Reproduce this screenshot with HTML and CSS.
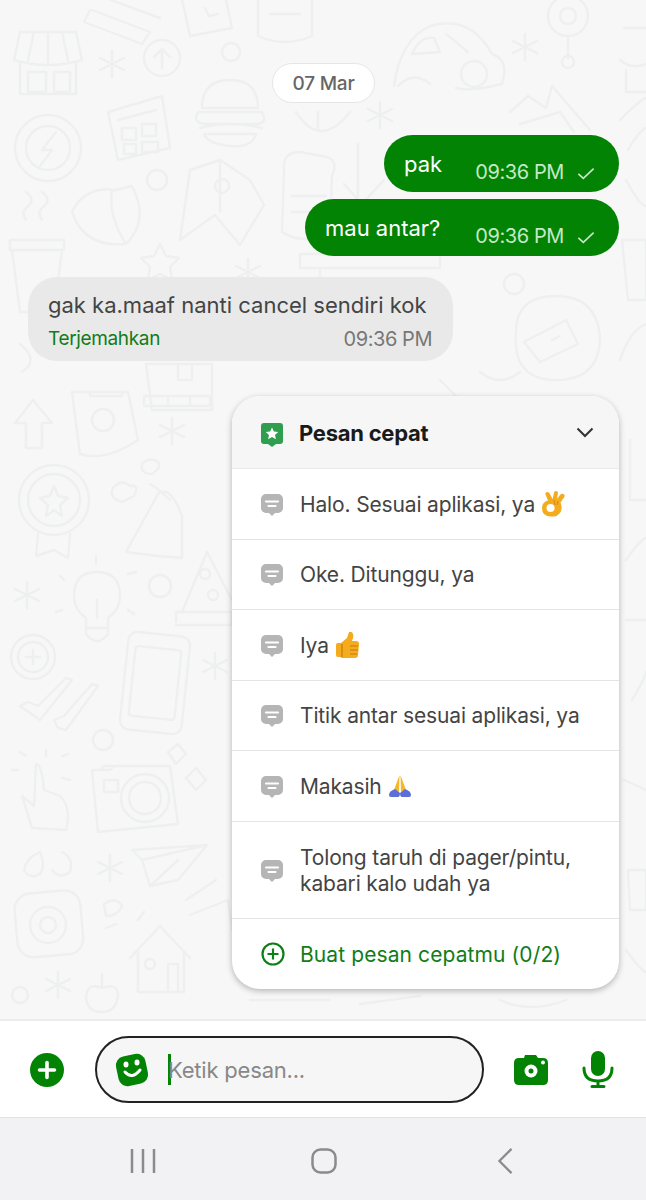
FILE: index.html
```html
<!DOCTYPE html>
<html lang="id">
<head>
<meta charset="utf-8">
<title>Chat</title>
<link rel="stylesheet" href="styles.css">
</head>
<body>
<svg class="defs" width="0" height="0" aria-hidden="true">
  <defs>
    <g id="ast"><path d="M0-13V13M-12-6 12 6M-12 6 12-6"/></g>
    <g id="msg"><path fill="#b5b5b5" d="M5 0h12a5 5 0 0 1 5 5v9a5 5 0 0 1-5 5h-3l-3 3-3-3H5a5 5 0 0 1-5-5V5a5 5 0 0 1 5-5z"/><path d="M5 7.500h12M7.500 12h7" stroke="#fff" stroke-width="2.200" stroke-linecap="round" fill="none"/></g>
  </defs>
</svg>
<div class="screen">
  <main class="chat">
    <svg class="doodles" viewBox="0 0 646 1021" aria-hidden="true">
      <g fill="none" stroke="#eeefef" stroke-width="2.400" stroke-linejoin="round" stroke-linecap="round">
        <!-- top row -->
        <path d="M92 10 150 32M100-4 160 18M90 10 84 22 142 44 150 32"/>
        <path d="M182 0 190 36 232 28 226 0M205 8l4 8 9-2"/>
        <path d="M258 0V36Q285 48 312 36V0M270 14H300"/>
        <path d="M20 32H76L82 60Q48 70 14 60zM34 32 28 60M48 32V62M62 32 68 60M20 64V94H76V64M28 72H46V92H28zM54 72H70V92H54z"/>
        <use href="#ast" x="112" y="64"/>
        <circle cx="162" cy="58" r="18"/><path d="M162 68V50M154 57 162 49 170 57"/>
        <circle cx="231" cy="52" r="9"/>
        <circle cx="48" cy="148" r="33"/><circle cx="48" cy="148" r="22"/><path d="M56 132 42 150H52L40 166"/>
        <path d="M108 112 162 96 170 148 118 160zM118 120 156 110M122 128H136V140H122zM142 124H156V136H142zM124 144H136V154H124zM142 142H158V152H142z"/>
        <path d="M202 108Q202 80 230 80T258 108zM198 112H262Q268 122 258 124H204Q192 122 198 112zM200 128Q230 120 262 128M204 134H256Q252 148 230 146T204 134z"/>
        <path d="M296 112Q320 150 350 112M318 112V128"/>
        <use href="#ast" x="380" y="115"/>
        <path d="M394 86Q400 40 430 26Q470 14 492 54Q510 60 502 84Q470 92 456 88M398 86Q414 70 430 84M412 54Q420 36 434 38L440 52zM446 34 468 52"/>
        <circle cx="474" cy="74" r="13"/>
        <use href="#ast" x="525" y="47"/>
        <circle cx="568" cy="16" r="20"/><circle cx="568" cy="16" r="8"/><path d="M568 36V58"/><circle cx="568" cy="62" r="6"/>
        <path d="M624 28H646M620 60Q632 70 646 64M626 70V92H646"/>
        <path d="M510 112 528 96 546 108 552 86 590 130M520 124 560 112 574 132"/>
        <!-- middle left -->
        <path d="M180 240 190 170 220 160 250 180 264 205 240 245 215 215zM220 162V212"/><circle cx="222" cy="186" r="7"/>
        <path d="M72 212Q84 186 116 190L132 186Q150 220 126 244Q84 248 72 212zM112 190Q108 216 126 244"/>
        <circle cx="157" cy="180" r="10"/>
        <path d="M284 170Q282 152 300 152L322 156Q340 158 332 176L330 236Q300 244 282 232zM292 196H326M292 212H322"/>
        <path d="M358 144V196M344 184 362 204 384 180"/>
        <path d="M12 250H62L54 312H20zM10 240H64V250H10zM26 220Q20 212 28 206T26 192M42 220Q36 212 44 206T42 192"/>
        <path d="M160 244 166 256 179 258 170 267 172 280 160 274 148 280 150 267 141 258 154 256z"/>
        <use href="#ast" x="248" y="272"/>
        <path d="M300 254H440V268H300zM320 268V300"/>
        <circle cx="514" cy="284" r="10"/>
        <path d="M516 332Q516 296 556 296T600 336Q600 380 556 380T516 332zM524 342 566 320 578 344 540 362zM552 340 560 336"/>
        <path d="M622 240H646V300H628zM620 120Q640 100 646 98M628 150Q640 130 646 128M626 180Q640 206 646 206"/>
        <path d="M630 440V500H646M620 360Q630 330 646 324"/>
        <path d="M50 296 70 284 90 300"/>
        <!-- under incoming bubble -->
        <path d="M146 364H212V410H152zM178 364V380H192V364"/>
        <path d="M20 344Q40 360 22 372M480 372Q500 388 520 372M440 380 460 400"/>
        <!-- lower left -->
        <path d="M33 400 52 423H42V448H26V423H15z"/>
        <path d="M72 392H128L138 440Q105 462 80 454zM90 392V396H122V392"/><circle cx="103" cy="420" r="11"/>
        <path d="M144 396H210V406H144zM168 396V406M190 396V406"/>
        <use href="#ast" x="172" y="431"/>
        <circle cx="54" cy="500" r="35"/><circle cx="54" cy="500" r="26"/>
        <path d="M54 486 58 496 68 498 60 505 62 516 54 510 46 516 48 505 40 498 50 496zM38 534 36 556 54 550 68 558 70 534"/>
        <path d="M113 488Q122 478 130 486 140 484 134 496L122 502Q108 498 113 488zM142 464Q150 456 158 462 162 468 152 474 140 474 142 464z"/>
        <path d="M126 552 158 494Q170 484 182 516L182 558 158 556zM150 484Q160 490 170 500"/>
        <use href="#ast" x="27" y="595"/>
        <path d="M97 572Q120 572 120 596 120 610 108 618V634Q97 648 86 634V618Q74 610 74 596 74 572 97 572zM86 628H108M97 600V618"/>
        <path d="M96 556V564M60 576 64 580M128 574 136 572M56 612 62 610M128 610 134 614"/>
        <circle cx="160" cy="586" r="11"/>
        <path d="M176 622V612H232V625H176M182 612 207 552 232 600M200 572"/>
        <circle cx="205" cy="574" r="5"/><circle cx="213" cy="595" r="5"/>
        <circle cx="33" cy="657" r="22"/><circle cx="33" cy="657" r="15"/><path d="M33 650V664M26 657H40"/>
        <path d="M20 706 40 720 72 680 66 678 38 706 28 702zM58 728 66 730 98 686 92 684 64 716 54 720z"/>
        <rect x="124" y="634" width="62" height="98" rx="9" transform="rotate(6 155 683)"/><rect x="132" y="648" width="46" height="70" rx="3" transform="rotate(6 155 683)"/>
        <use href="#ast" x="215" y="666"/>
        <circle cx="103" cy="740" r="10"/>
        <path d="M92 770H110L114 766H170L178 824 98 832zM100 770 104 766H116"/>
        <circle cx="145" cy="798" r="24"/><circle cx="145" cy="798" r="16"/><path d="M104 780H118V792H104z"/>
        <path d="M168 752 178 744 186 754 176 764zM186 778 196 768 206 780 196 790z"/>
        <path d="M36 764Q42 764 44 790L60 796Q72 808 66 830L32 828 22 796 34 806z"/>
        <path d="M46 750V756M20 752 26 756M62 756 68 754M12 770H18M62 778 70 780"/>
        <path d="M40 852Q26 858 24 870 30 880 40 874 46 866 40 852zM62 852Q74 858 70 872 60 880 52 870"/>
        <use href="#ast" x="110" y="868"/>
        <path d="M132 850 207 845 178 880 150 886 142 860zM142 860 207 845M150 886 178 860"/>
        <rect x="16" y="892" width="66" height="64" rx="16" transform="rotate(-5 48 925)"/><circle cx="48" cy="925" r="18"/><circle cx="48" cy="925" r="8"/>
        <path d="M104 904Q116 896 122 906 118 916 106 916zM106 928 116 924M138 920 144 912"/>
        <path d="M130 958 160 926 190 958M138 952V992H184V952M168 992V964H178V992"/><circle cx="150" cy="964" r="5"/>
        <path d="M186 900 216 880M190 915 228 900 232 930"/>
        <use href="#ast" x="58" y="985"/>
        <circle cx="20" cy="995" r="8"/>
        <path d="M102 988Q118 982 118 996 116 1012 102 1012 86 1012 86 996 88 982 102 988zM102 986V974"/>
        <!-- right edge and below card -->
        <path d="M626 560Q640 540 646 538M626 620H646M632 700Q644 680 646 672M624 780 646 790M628 870H646V910H630zM626 950Q640 970 646 972"/>
        <path d="M250 1000H330M360 1004 420 996M500 1000Q530 1014 566 1000"/>
      </g>
    </svg>
    <div class="date-pill">07 Mar</div>
    <div class="bubble outgoing first">
      <span class="msg-text">pak</span>
      <span class="msg-meta">09:36 PM<svg class="tick" viewBox="0 0 20 14"><path d="M1.500 7.500 7 12.500 18.500 1.500"/></svg></span>
    </div>
    <div class="bubble outgoing">
      <span class="msg-text">mau antar?</span>
      <span class="msg-meta">09:36 PM<svg class="tick" viewBox="0 0 20 14"><path d="M1.500 7.500 7 12.500 18.500 1.500"/></svg></span>
    </div>
    <div class="bubble incoming">
      <div class="msg-text">gak ka.maaf nanti cancel sendiri kok</div>
      <div class="incoming-foot"><span class="translate">Terjemahkan</span><span class="incoming-time">09:36 PM</span></div>
    </div>
    <section class="quick-card">
      <header class="quick-head">
        <svg class="quick-star" viewBox="0 0 22 24"><path fill="#2f9e4f" d="M3 0h16a3 3 0 0 1 3 3v15a3 3 0 0 1-3 3h-4l-4 3-4-3H3a3 3 0 0 1-3-3V3a3 3 0 0 1 3-3z"/><path fill="#fff" d="m11 4.500 1.900 4 4.300.5-3.200 2.900.9 4.300-3.900-2.200-3.900 2.200.9-4.300L4.800 9l4.300-.5z"/></svg>
        <h2 class="quick-title">Pesan cepat</h2>
        <svg class="chevron" viewBox="0 0 18 11"><path d="M1.500 1.500 9 9l7.500-7.500"/></svg>
      </header>
      <div class="quick-row"><svg class="msg-icon" viewBox="0 0 22 22"><use href="#msg"/></svg><span>Halo. Sesuai aplikasi, ya</span>
        <svg class="emoji" viewBox="0 0 24 26"><path fill="#f5ab1e" d="M10 25.500Q1 25.500 1 17 1 11 7 9.500L4.500 3.500Q4 1 6 1t3 2l2.500 5L13 2q0-2 2-2t2 2l-1 6 3-4q1.500-2 3.500-1t.5 3.500l-3.500 5q2.500 6-.5 10.500-3 3.500-6 3.500z"/><circle cx="9.500" cy="17" r="4" fill="#fff"/><path fill="none" stroke="#d9860f" stroke-width="1" d="M13 9 14 14M17 10l-1 4"/></svg></div>
      <div class="quick-row"><svg class="msg-icon" viewBox="0 0 22 22"><use href="#msg"/></svg><span>Oke. Ditunggu, ya</span></div>
      <div class="quick-row"><svg class="msg-icon" viewBox="0 0 22 22"><use href="#msg"/></svg><span>Iya</span>
        <svg class="emoji" viewBox="0 0 24 26"><path fill="#f5ab1e" d="M1 13q0-2 2-2h3l6-5 2-6q3-1 4 2 1 3-1 7h4q3 0 3 3l-1 11q0 3-3 3H7l-2-1H3q-2 0-2-2z"/><path fill="none" stroke="#c9780c" stroke-width="1.200" d="M15 14h8M15 18h8M15 22h7M7 12v13"/></svg></div>
      <div class="quick-row"><svg class="msg-icon" viewBox="0 0 22 22"><use href="#msg"/></svg><span>Titik antar sesuai aplikasi, ya</span></div>
      <div class="quick-row"><svg class="msg-icon" viewBox="0 0 22 22"><use href="#msg"/></svg><span>Makasih</span>
        <svg class="emoji" viewBox="0 0 24 24"><path fill="#f5b72a" d="M11.500 1 6 16l5 2zM12.500 1 18 16l-5 2z"/><path fill="#5b6fd6" d="M1 21q0-4 6-6l5 4q0 4-2 4H3q-2 0-2-2zM23 21q0-4-6-6l-5 4q0 4 2 4h7q2 0 2-2z"/></svg></div>
      <div class="quick-row tall"><svg class="msg-icon" viewBox="0 0 22 22"><use href="#msg"/></svg><span>Tolong taruh di pager/pintu,<br>kabari kalo udah ya</span></div>
      <div class="quick-add">
        <svg class="add-icon" viewBox="0 0 24 24"><circle cx="12" cy="12" r="10.500"/><path d="M12 6.500v11M6.500 12h11"/></svg>
        <span>Buat pesan cepatmu (0/2)</span>
      </div>
    </section>
  </main>
  <footer class="composer">
    <svg class="plus-btn" viewBox="0 0 34 34"><circle cx="17" cy="17" r="17" fill="#028303"/><path d="M17 9.500v15M9.500 17h15" stroke="#fff" stroke-width="3.600" stroke-linecap="round"/></svg>
    <div class="input-pill">
      <svg class="smile" viewBox="0 0 36 36"><rect x="3" y="3" width="30" height="30" rx="9" fill="#028303" transform="rotate(-12 18 18)"/><ellipse cx="12" cy="12.500" rx="2.500" ry="3" fill="#fff"/><ellipse cx="23" cy="10.500" rx="2.500" ry="3" fill="#fff"/><path d="M11 20q7 8 15-2" stroke="#fff" stroke-width="3" stroke-linecap="round" fill="none"/></svg>
      <span class="caret"></span>
      <span class="placeholder">Ketik pesan...</span>
    </div>
    <svg class="camera" viewBox="0 0 36 30"><path fill="#028303" d="M6 3h5l1-3h11l2 3h5q5 0 5 5v17q0 5-5 5H6q-5 0-5-5V8q0-5 5-5z"/><circle cx="18" cy="16" r="6.500" fill="#fff"/><circle cx="18" cy="16" r="2.500" fill="#028303"/><circle cx="30" cy="7.500" r="2" fill="#fff"/></svg>
    <svg class="mic" viewBox="0 0 32 37"><rect x="9" y="0" width="14" height="25" rx="7" fill="#028303"/><path d="M2 17q0 13 14 13t14-13M16 30v5M10 35.500h12" stroke="#028303" stroke-width="3" stroke-linecap="round" fill="none"/></svg>
  </footer>
  <nav class="nav-bar">
    <svg class="nav-icon" viewBox="0 0 26 26"><path d="M2 1v24M13 1v24M24 1v24"/></svg>
    <svg class="nav-icon" viewBox="0 0 26 26"><rect x="1.500" y="1.500" width="23" height="23" rx="8"/></svg>
    <svg class="nav-icon" viewBox="0 0 26 28"><path d="M20 1 7 14l13 13"/></svg>
  </nav>
</div>
</body>
</html>
```
FILE: styles.css
```css
* { box-sizing: border-box; }
html, body { margin: 0; padding: 0; }
body { font-family: Inter, "Noto Sans", sans-serif; background: #f7f7f7; color: #444; }
.defs { position: absolute; }
.screen { width: 646px; height: 1200px; display: flex; flex-direction: column; overflow: hidden; }

.chat { position: relative; height: 1021px; flex: none; padding: 63px 27px 0 28px; display: flex; flex-direction: column; align-items: flex-end; background: #f7f7f7; border-bottom: 2px solid #ececec; overflow: hidden; }
.doodles { position: absolute; left: 0; top: 0; width: 646px; height: 1021px; filter: blur(.6px); }
.date-pill, .bubble, .quick-card { position: relative; }

.date-pill { align-self: center; width: 103px; height: 40px; display: flex; align-items: center; justify-content: center; background: #fff; border: 1px solid #e6e6e6; border-radius: 20px; font-size: 19px; font-weight: 500; color: #666; letter-spacing: -.2px; }

.bubble { border-radius: 29px; }
.outgoing { height: 57px; display: flex; background: #028303; color: #fff; padding: 0 24px 0 20px; margin-top: 7px; justify-content: space-between; }
.outgoing.first { width: 235px; margin-top: 32px; }
.outgoing:not(.first) { width: 314px; }
.outgoing .msg-text { font-size: 22px; line-height: 27px; padding-top: 16px; }
.msg-meta { display: flex; align-items: center; gap: 13px; height: 27px; margin-top: 23px; font-size: 20px; color: #c6e8c6; letter-spacing: -.4px; }
.tick { width: 18px; height: 13px; fill: none; stroke: #c6e8c6; stroke-width: 1.800; margin-top: 3px; }

.incoming { align-self: flex-start; width: 425px; height: 84px; margin-top: 21px; padding: 15px 21px 0 20px; background: #e9e9e9; }
.incoming .msg-text { font-size: 22px; line-height: 27px; color: #444; white-space: nowrap; }
.incoming-foot { display: flex; justify-content: space-between; margin-top: 8px; line-height: 24px; }
.translate { font-size: 19px; color: #0f7d18; letter-spacing: -.35px; }
.incoming-time { font-size: 20px; color: #777; letter-spacing: -.45px; }

.quick-card { width: 387px; height: 593px; margin-top: 35px; background: #fff; border-radius: 28px; box-shadow: 0 2px 6px rgba(0,0,0,.28); overflow: hidden; }
.quick-head { height: 73px; display: flex; align-items: center; padding: 0 25px 0 29px; background: #f6f6f6; border-bottom: 1px solid #e9e9e9; }
.quick-star { width: 22px; height: 24px; flex: none; margin-top: 5px; }
.quick-title { flex: 1; margin: 2px 0 0 16px; font-size: 22px; font-weight: 700; color: #1a1a1a; letter-spacing: -.25px; }
.chevron { width: 18px; height: 11px; fill: none; stroke: #333; stroke-width: 2; }

.quick-row { height: 70.500px; display: flex; align-items: center; padding-left: 29px; border-bottom: 1px solid #e4e4e4; font-size: 21px; line-height: 26px; color: #444; letter-spacing: -.15px; white-space: nowrap; }
.quick-row span { padding-top: 2px; }
.quick-row.tall { height: 97px; }
.msg-icon { width: 22px; height: 22px; flex: none; margin: 2px 17px 0 0; overflow: visible; }
.emoji { width: 24px; height: 26px; flex: none; margin-left: 6px; }

.quick-add { height: 71px; display: flex; align-items: center; padding-left: 29px; font-size: 21px; color: #0f7d18; letter-spacing: .1px; }
.add-icon { width: 24px; height: 24px; flex: none; margin-right: 15px; fill: none; stroke: #0f7d18; stroke-width: 2.200; }

.composer { height: 97px; flex: none; display: flex; align-items: center; padding: 1px 32px 0 30px; background: #fff; border-bottom: 1px solid #e2e2e2; }
.plus-btn { width: 34px; height: 34px; flex: none; }
.input-pill { width: 390px; height: 67px; margin-left: 31px; display: flex; align-items: center; padding-left: 17px; background: #f6f6f6; border: 2px solid #222; border-radius: 34px; }
.smile { width: 36px; height: 36px; flex: none; }
.caret { width: 3px; height: 31px; margin-left: 18px; background: #028303; flex: none; }
.placeholder { font-size: 22px; color: #888; letter-spacing: -.2px; margin-left: -3px; }
.camera { width: 36px; height: 30px; flex: none; margin-left: 29px; }
.mic { width: 32px; height: 37px; flex: none; margin-left: 33px; }

.nav-bar { flex: 1; display: flex; align-items: center; padding: 4px 0 0 130px; gap: 155px; background: #f2f2f4; }
.nav-icon { width: 26px; height: 26px; fill: none; stroke: #8b8b8e; stroke-width: 2.500; }
```
